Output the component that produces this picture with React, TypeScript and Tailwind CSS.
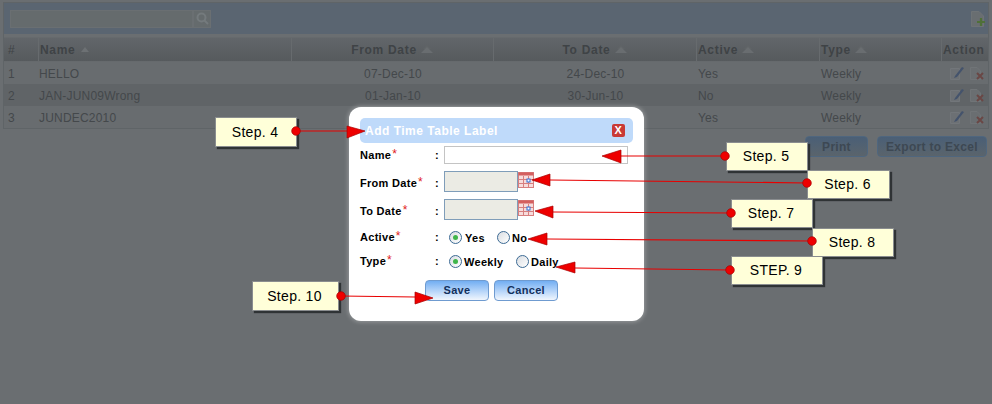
const rows = [
  { n: "1", name: "HELLO", from: "07-Dec-10", to: "24-Dec-10", active: "Yes" },
  { n: "2", name: "JAN-JUN09Wrong", from: "01-Jan-10", to: "30-Jun-10", active: "No" },
  { n: "3", name: "JUNDEC2010", from: "", to: "", active: "Yes" },
];

function SortIcon({ up = false }: { up?: boolean }) {
  return (
    <svg width="14" height="9" viewBox="0 0 14 9" className="ml-[3px] inline-block">
      {up ? (
        <path d="M3 7 L7 2 L11 7 Z" fill="#6d7174" />
      ) : (
        <>
          <path d="M3 4 L7 0 L11 4 Z" fill="#606467" />
          <path d="M1 8 L7 2 L13 8 Z" fill="#696d70" />
        </>
      )}
    </svg>
  );
}

function EditIcon() {
  return (
    <svg width="16" height="14" viewBox="0 0 16 14">
      <path d="M1.5 2.5 H10.5 V13.5 H1.5 Z" fill="#6c7074" stroke="#72767a" />
      <path d="M6 10 L13 1 L15 2 L8 11 L5 12 Z" fill="#44536c" />
    </svg>
  );
}

function DeleteIcon() {
  return (
    <svg width="16" height="14" viewBox="0 0 16 14">
      <path d="M1.5 1.5 H8 L11.5 5 V13.5 H1.5 Z" fill="#6a6e71" stroke="#707477" />
      <path d="M8 7 L14 13 M14 7 L8 13" stroke="#6a4745" strokeWidth="2" />
    </svg>
  );
}

function CalendarIcon() {
  return (
    <svg width="16" height="16" viewBox="0 0 16 16" className="mt-px shrink-0">
      <rect x="0.5" y="0.5" width="15" height="15" fill="#f7dcdc" stroke="#d77f7f" />
      <rect x="0.5" y="0.5" width="15" height="3" fill="#d45f5f" />
      <path d="M5.5 4 V16 M10.5 4 V16 M0 7.5 H16 M0 11.5 H16" stroke="#d77f7f" />
      <rect x="9" y="7" width="3" height="3" fill="#fff" stroke="#2f6fd8" />
    </svg>
  );
}

function Radio({ checked = false }: { checked?: boolean }) {
  return (
    <span className="flex h-[13px] w-[13px] shrink-0 items-center justify-center rounded-full border border-[#3c6a94] bg-gradient-to-br from-[#d9dde2] to-white">
      {checked && <span className="h-[5px] w-[5px] rounded-full bg-[#3fb54a]" />}
    </span>
  );
}

function Label({ text }: { text: string }) {
  return (
    <span className="flex w-[84px] shrink-0 items-start font-bold text-black">
      <span className="flex w-[75px]">
        {text}
        <span className="-mt-[2px] ml-px text-[12px] font-normal text-[#e02020]">*</span>
      </span>
      <span>:</span>
    </span>
  );
}

const callouts = [
  { x: 215, y: 117, w: 82, h: 30, t: "Step. 4" },
  { x: 726, y: 142, w: 82, h: 29, t: "Step. 5" },
  { x: 807, y: 170, w: 83, h: 29, t: "Step. 6" },
  { x: 731, y: 199, w: 82, h: 29, t: "Step. 7" },
  { x: 812, y: 228, w: 82, h: 29, t: "Step. 8" },
  { x: 731, y: 256, w: 92, h: 29, t: "STEP. 9" },
  { x: 252, y: 281, w: 87, h: 30, t: "Step. 10" },
];

const arrows = [
  { d: [296, 131], l: [347, 131], p: "347,126 365,131 347,138" },
  { d: [725, 156], l: [621, 156], p: "621,150 602,156 621,163" },
  { d: [807, 183], l: [550, 180], p: "550,174 532,180 550,186" },
  { d: [731, 213], l: [553, 212], p: "553,206 535,211 553,218" },
  { d: [812, 241], l: [547, 239], p: "547,233 528,239 547,245" },
  { d: [730, 270], l: [575, 268], p: "575,262 556,267 575,273" },
  { d: [341, 296], l: [415, 297], p: "415,292 433,298 415,304" },
];

export default function App() {
  return (
    <div className="relative h-[404px] w-[992px] overflow-hidden bg-[#6a6e71] font-['Liberation_Sans',sans-serif]">
      <div className="ml-[3px] mt-[2px] w-[986px] border border-[#5f6467] text-[12px] text-[#44484b]">
        <div className="flex h-[31px] items-center justify-between bg-[#5a6571] pl-[6px] pr-[2px]">
          <div className="flex h-[18px]">
            <div className="w-[183px] border border-[#6a6f72] bg-[#656b6d]" />
            <div className="flex w-[18px] items-center justify-center border border-[#6a6f72] bg-[#656b6d]">
              <svg width="13" height="13" viewBox="0 0 13 13" fill="none" stroke="#747a7d" strokeWidth="2">
                <circle cx="5.5" cy="5.5" r="4" />
                <path d="M8.5 8.5 L12 12" />
              </svg>
            </div>
          </div>
          <svg width="16" height="16" viewBox="0 0 16 16">
            <path d="M1.5 0.5 H9 L13.5 5 V15.5 H1.5 Z" fill="#696e71" stroke="#6e7376" />
            <path d="M11 7 V15 M7 11 H15" stroke="#4f7038" strokeWidth="2.2" />
          </svg>
        </div>
        <div className="h-[3px] bg-[#6a6e71]" />
        <div className="flex h-[25px] items-center border-y border-[#666a6d] bg-gradient-to-b from-[#62666a] to-[#565a5d] font-bold tracking-[0.7px] text-[#3f4346]">
          <div className="w-[34px] pl-1 font-normal">#</div>
          <div className="flex h-full w-[254px] items-center border-l border-r border-[#676b6e] pl-[1px]">Name<SortIcon up /></div>
          <div className="flex h-full w-[202px] items-center justify-center border-r border-[#676b6e]">From Date<SortIcon /></div>
          <div className="flex h-full w-[203px] items-center justify-center border-r border-[#676b6e]">To Date<SortIcon /></div>
          <div className="flex h-full w-[123px] items-center border-r border-[#676b6e] pl-[1px]">Active<SortIcon /></div>
          <div className="flex h-full w-[122px] items-center border-r border-[#676b6e] pl-[1px]">Type<SortIcon /></div>
          <div className="flex-1 pl-[1px]">Action</div>
        </div>
        {rows.map((r, i) => (
          <div key={r.n} className={`flex h-[22px] items-center pt-[2px] tracking-[0.2px] ${i === 1 ? "bg-[#606467]" : "bg-[#686c6f]"}`}>
            <div className="w-[34px] pl-1">{r.n}</div>
            <div className="w-[254px] pl-[1px]">{r.name}</div>
            <div className="w-[202px] text-center">{r.from}</div>
            <div className="w-[203px] text-center">{r.to}</div>
            <div className="w-[123px] pl-[1px]">{r.active}</div>
            <div className="w-[122px] pl-[1px]">Weekly</div>
            <div className="-mt-[2px] flex flex-1 justify-end gap-[4px] pr-[3px]"><EditIcon /><DeleteIcon /></div>
          </div>
        ))}
      </div>

      <div className="mr-[5px] mt-[7px] flex justify-end gap-[9px] text-[12px] font-bold tracking-[0.3px] text-[#3d4853]">
        <div className="flex h-[21px] w-[63px] items-center justify-center rounded-[4px] border border-[#4f667e] bg-gradient-to-b from-[#4a5f76] to-[#5a646c]">Print</div>
        <div className="flex h-[21px] w-[110px] items-center justify-center rounded-[4px] border border-[#4f667e] bg-gradient-to-b from-[#4a5f76] to-[#5a646c]">Export to Excel</div>
      </div>

      {/* Modal */}
      <div className="absolute left-[349px] top-[107px] flex h-[214px] w-[295px] flex-col rounded-[12px] bg-white px-[11px] pt-[11px] text-[11px] tracking-[0.3px] shadow-[0_0_4px_1px_rgba(255,255,255,0.3)]">
        <div className="flex h-[25px] shrink-0 items-center justify-between rounded-[5px] bg-[#bfdafa] pl-[5px] pr-[8px] text-[12px] font-bold tracking-[0.5px] text-white">
          <span>Add Time Table Label</span>
          <span className="flex h-[13px] w-[13px] items-center justify-center rounded-[2px] bg-[#c93a36] text-[11px] leading-none text-white">X</span>
        </div>
        <div className="mt-[3px] flex h-[18px] items-center">
          <Label text="Name" />
          <div className="h-[18px] w-[184px] border border-[#c4c4c4] bg-white" />
        </div>
        <div className="mt-[7px] flex h-[21px] items-start">
          <div className="mt-[4px]"><Label text="From Date" /></div>
          <div className="h-[21px] w-[74px] border border-[#7f9db9] bg-[#ebebe4]" />
          <CalendarIcon />
        </div>
        <div className="mt-[7px] flex h-[21px] items-start">
          <div className="mt-[4px]"><Label text="To Date" /></div>
          <div className="h-[21px] w-[74px] border border-[#7f9db9] bg-[#ebebe4]" />
          <CalendarIcon />
        </div>
        <div className="mt-[10px] flex h-[14px] items-center font-bold text-black">
          <Label text="Active" />
          <div className="ml-[5px] flex items-center"><Radio checked /><span className="ml-[3px] mt-[3px] w-[32px]">Yes</span></div>
          <div className="flex items-center"><Radio /><span className="ml-[2px] mt-[3px]">No</span></div>
        </div>
        <div className="mt-[10px] flex h-[14px] items-center font-bold text-black">
          <Label text="Type" />
          <div className="ml-[5px] flex items-center"><Radio checked /><span className="ml-[2px] mt-[3px] w-[52px]">Weekly</span></div>
          <div className="flex items-center"><Radio /><span className="ml-[2px] mt-[3px]">Daily</span></div>
        </div>
        <div className="ml-[65px] mt-[12px] flex gap-[5px] font-bold text-[#12305c]">
          <div className="flex h-[21px] w-[64px] items-center justify-center rounded-[4px] border border-[#6f9bd0] bg-gradient-to-b from-[#72aef2] to-[#f1f6fd]">Save</div>
          <div className="flex h-[21px] w-[64px] items-center justify-center rounded-[4px] border border-[#6f9bd0] bg-gradient-to-b from-[#72aef2] to-[#f1f6fd]">Cancel</div>
        </div>
      </div>

      {/* Callouts */}
      {callouts.map((c) => (
        <div
          key={c.t}
          className="absolute flex items-center justify-center border border-[#8a8d8f] bg-[#ffffd9] pr-[2px] text-[14px] tracking-[0.3px] text-black shadow-[2px_2px_1px_#2f3335]"
          style={{ left: c.x, top: c.y, width: c.w, height: c.h }}
        >
          {c.t}
        </div>
      ))}

      <svg className="absolute left-0 top-0" width="992" height="404">
        {arrows.map((a, i) => (
          <g key={i}>
            <line x1={a.d[0]} y1={a.d[1]} x2={a.l[0]} y2={a.l[1]} stroke="#e80000" strokeWidth="1.2" />
            <polygon points={a.p} fill="#ee0000" stroke="#a80000" strokeWidth="0.7" />
            <circle cx={a.d[0]} cy={a.d[1]} r="4.3" fill="#ee0000" stroke="#a80000" strokeWidth="0.7" />
          </g>
        ))}
      </svg>
    </div>
  );
}
